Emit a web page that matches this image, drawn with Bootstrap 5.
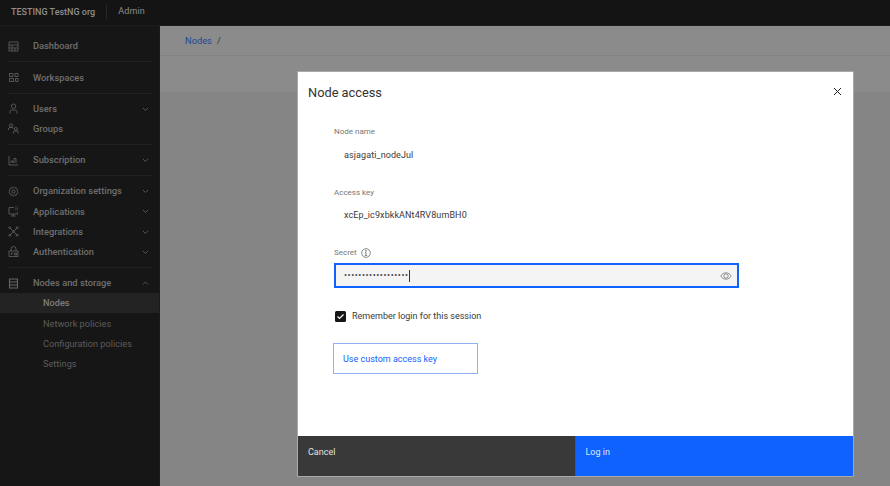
<!DOCTYPE html>
<html lang="en"><head><meta charset="utf-8"><title>Node access</title>
<link href="https://cdn.jsdelivr.net/npm/bootstrap@5.3.0/dist/css/bootstrap.min.css" rel="stylesheet">
<style>
html,body{height:486px;overflow:hidden;background:#858585;font-family:"Roboto","Liberation Sans",sans-serif}
.shell{width:890px;height:486px}
.topbar{height:26px;background:#141414;color:#8e8e8e;font-size:9px;border-bottom:1px solid #1c1c1c;padding:0 0 2px 11px;flex:none}
.org{font-weight:500;padding-right:11px;border-right:1px solid #2a2a2a;line-height:14px}
.role{padding-left:11px;letter-spacing:.15px}
.rail{width:160px;flex:none;background:#161616;padding-top:5.300px;border-right:1px solid #1a1a1a}
.grp{padding:5px 0;margin:0 8px;border-bottom:1px solid #222}
.grp.flush{margin:0;padding-bottom:0;border-bottom:0}
.item{height:20.2px;color:#6f6f6f;font-size:9.3px;font-weight:500;white-space:nowrap}
.grp .ico{width:11px;height:11px;margin-right:14px;flex:none;stroke:#666;fill:none;stroke-width:.8}
.flush .ico{margin-left:8px}
.chev{width:7px;height:4.400px;stroke:#666;fill:none;stroke-width:.9;margin-left:auto;margin-right:2.500px;flex:none}
.flush .chev{margin-right:10.500px}
.sub{height:20.2px;color:#5c5c5c;font-size:9.2px;padding-left:43px;white-space:nowrap}
.sub.on{background:#232323;color:#7d7d7d;font-weight:500}
.work{min-width:0;background:#858585}
.crumb{height:30px;background:#8b8b8b;border-bottom:1px solid #828282;padding:1px 0 0 25px;font-size:9.300px;color:#333}
.crumb a{color:#214a94;text-decoration:none;margin-right:5px}
.band{height:36px;background:#8b8b8b}
.dlg{position:absolute;left:298px;top:72px;width:555px;height:404px;background:#fff;box-shadow:0 0 0 1px #a9a9a9;display:flex;flex-direction:column}
.dlg-head{height:38px;padding:12px 10px 0 10px;flex:none}
.dlg-title{font-size:12.800px;font-weight:400;line-height:18px;color:#333;margin:0}
.xbtn{width:12px;height:12px;border:0;background:none;padding:0;margin:1px 0 0 auto;display:flex}
.xbtn svg{width:9px;height:9px;margin:1.5px;stroke:#222;stroke-width:1}
.dlg-body{flex:1 1 auto;padding:0 0 0 36px}
.lbl{font-size:8px;color:#777;line-height:12px;margin:0}
.val{font-size:9px;color:#3a3a3a;padding-left:10px;line-height:14px;letter-spacing:.1px}
.pwd{width:405px;height:25px;background:#f4f4f4;border:2px solid #0f62fe;padding:0 5px 0 8px;color:#444;font-size:9px}
.dots{letter-spacing:.55px;line-height:1}
.caret{width:1px;height:12px;background:#333;display:inline-block}
.eye{width:12px;height:12px;margin-left:auto;stroke:#777;fill:none;stroke-width:.8}
.tick{width:11px;height:11px;background:#161616;border-radius:1.5px;flex:none;display:flex}
.tick svg{width:11px;height:11px;stroke:#fff;fill:none;stroke-width:1.2}
.rem{font-size:9px;color:#3a3a3a;margin-left:6px}
.linkbtn{width:145px;height:31px;border:1px solid #8fb3f5;font-size:9px;color:#0f62fe;background:#fff;padding:3px 0 0 9px;text-align:left;display:block}
.dlg-foot{height:40px;flex:none}
.fbtn{flex:1 1 50%;border:0;border-radius:0;text-align:left;padding:8.500px 10px 0;font-size:9px;color:#e3e3e3;line-height:14px;display:flex;align-items:flex-start}
.fbtn.dk{background:#393939;border-right:1px solid #555}
.fbtn.pr{background:#0f62fe;color:#dfe9ff}
</style></head>
<body>
<div class="shell d-flex flex-column position-relative">
  <div class="topbar d-flex align-items-center"><span class="org">TESTING TestNG org</span><span class="role">Admin</span></div>
  <div class="d-flex flex-grow-1" style="min-height:0">
    <nav class="rail">
      <div class="grp"><div class="item d-flex align-items-center"><svg class="ico" viewBox="0 0 11 11"><path d="M1 1h9v9H1zM1 4h9M4 4v6M1 7h9M7 7v3"/></svg>Dashboard</div></div>
      <div class="grp"><div class="item d-flex align-items-center"><svg class="ico" viewBox="0 0 11 11"><path d="M1.500 1.500h3.500v3H1.500zM7 1.500h3v3H7zM1.500 6.500h4v3h-4zM7.500 6.500h2.500v3H7.500z"/></svg>Workspaces</div></div>
      <div class="grp">
        <div class="item d-flex align-items-center"><svg class="ico" viewBox="0 0 11 11"><circle cx="5.500" cy="3.200" r="2.200"/><path d="M2 10.500V8.500c0-1 .8-1.500 1.500-1.500h4c.8 0 1.500.6 1.500 1.500v2"/></svg>Users<svg class="chev" viewBox="0 0 8 5"><path d="M1 1l3 3 3-3"/></svg></div>
        <div class="item d-flex align-items-center"><svg class="ico" viewBox="0 0 11 11"><circle cx="3" cy="2.500" r="1.600"/><path d="M.5 7V5.500C.5 5 1 4.600 1.500 4.600h3c.5 0 1 .4 1 .9"/><circle cx="7.800" cy="6" r="1.500"/><path d="M5.500 10.500V9c0-.5.5-1 1-1h2.700c.6 0 1 .5 1 1v1.500"/></svg>Groups</div>
      </div>
      <div class="grp"><div class="item d-flex align-items-center"><svg class="ico" viewBox="0 0 11 11"><path d="M1 1v9h9M3 8V6h2v2M6 8V3.500h2V8"/></svg>Subscription<svg class="chev" viewBox="0 0 8 5"><path d="M1 1l3 3 3-3"/></svg></div></div>
      <div class="grp">
        <div class="item d-flex align-items-center"><svg class="ico" viewBox="0 0 11 11"><path d="M5.500 1l1.200 1 1.500-.2.600 1.500 1.200 1-.6 1.200.6 1.200-1.200 1-.6 1.500-1.500-.2-1.200 1-1.200-1-1.500.2-.6-1.500-1.200-1 .6-1.200-.6-1.200 1.200-1 .6-1.500 1.500.2z"/><circle cx="5.500" cy="5.500" r="1.600"/></svg>Organization settings<svg class="chev" viewBox="0 0 8 5"><path d="M1 1l3 3 3-3"/></svg></div>
        <div class="item d-flex align-items-center"><svg class="ico" viewBox="0 0 11 11"><path d="M6 1.500H1v6.500h8.500V6M5.200 8v2M3 10h4.500M7.500 1h.8M9.300 1h.8M7.500 2.500h.8M9.300 2.500h.8M7.500 4h.8M9.300 4h.8"/></svg>Applications<svg class="chev" viewBox="0 0 8 5"><path d="M1 1l3 3 3-3"/></svg></div>
        <div class="item d-flex align-items-center"><svg class="ico" viewBox="0 0 11 11"><circle cx="1.800" cy="1.800" r="1"/><circle cx="9.200" cy="1.800" r="1"/><circle cx="1.800" cy="9.200" r="1"/><circle cx="9.200" cy="9.200" r="1"/><path d="M2.500 2.500l2.200 2.200h1.600l2.200-2.200M2.500 8.500l2.200-2.200h1.600l2.200 2.200M4.700 4.700v1.600M6.300 4.700v1.600"/></svg>Integrations<svg class="chev" viewBox="0 0 8 5"><path d="M1 1l3 3 3-3"/></svg></div>
        <div class="item d-flex align-items-center"><svg class="ico" viewBox="0 0 11 11"><path d="M1 5h9v5.500H1zM3 5V3a2.500 2.500 0 0 1 5 0v2M3.500 9V7.200h1.500M6.500 9V7h2v2z"/></svg>Authentication<svg class="chev" viewBox="0 0 8 5"><path d="M1 1l3 3 3-3"/></svg></div>
      </div>
      <div class="grp flush">
        <div class="item d-flex align-items-center"><svg class="ico" viewBox="0 0 11 11"><path d="M1.500 1h8v3h-8zM1.500 4h8v3h-8zM1.500 7h8v3h-8z" stroke-width="1.100"/></svg>Nodes and storage<svg class="chev" viewBox="0 0 8 5"><path d="M1 4l3-3 3 3"/></svg></div>
        <div class="sub on d-flex align-items-center">Nodes</div>
        <div class="sub d-flex align-items-center">Network policies</div>
        <div class="sub d-flex align-items-center">Configuration policies</div>
        <div class="sub d-flex align-items-center">Settings</div>
      </div>
    </nav>
    <main class="work flex-grow-1">
      <div class="crumb d-flex align-items-center"><a href="#">Nodes</a><span>/</span></div>
      <div class="band"></div>
    </main>
  </div>
  <section class="dlg" role="dialog" aria-label="Node access">
    <div class="dlg-head d-flex"><h1 class="dlg-title">Node access</h1><button class="xbtn" type="button" aria-label="Close"><svg viewBox="0 0 9 9"><path d="M1 1l7 7M8 1l-7 7"/></svg></button></div>
    <div class="dlg-body">
      <p class="lbl" style="margin-top:16px">Node name</p>
      <div class="val" style="margin-top:10px">asjagati_nodeJul</div>
      <p class="lbl" style="margin-top:25px">Access key</p>
      <div class="val" style="margin-top:9px">xcEp_ic9xbkkANt4RV8umBH0</div>
      <p class="lbl d-flex align-items-center" style="margin-top:25px">Secret<svg width="10" height="10" viewBox="0 0 10 10" class="ms-1" fill="none" stroke="#555" stroke-width=".7"><circle cx="5" cy="5" r="4.300"/><path d="M5 4.300v3M3.800 7.400h2.400M4 4.300h1"/><circle cx="5" cy="2.800" r=".4" fill="#555"/></svg></p>
      <div class="pwd d-flex align-items-center" style="margin-top:4px"><span class="dots">••••••••••••••••••</span><span class="caret"></span><svg class="eye" viewBox="0 0 12 12"><path d="M.8 6C2 3.800 4 2.800 6 2.800S10 3.800 11.200 6C10 8.200 8 9.200 6 9.200S2 8.200.8 6z"/><circle cx="6" cy="6" r="2.200"/></svg></div>
      <div class="d-flex align-items-center" style="margin:21.500px 0 0 1px"><span class="tick"><svg viewBox="0 0 11 11"><path d="M2.500 5.500l2 2 4-4"/></svg></span><span class="rem">Remember login for this session</span></div>
      <button type="button" class="linkbtn" style="margin-top:19.500px;margin-left:-1px">Use custom access key</button>
    </div>
    <div class="dlg-foot d-flex"><button type="button" class="btn fbtn dk">Cancel</button><button type="button" class="btn fbtn pr">Log in</button></div>
  </section>
</div>
<script src="https://cdn.jsdelivr.net/npm/bootstrap@5.3.0/dist/js/bootstrap.bundle.min.js"></script>
</body></html>
